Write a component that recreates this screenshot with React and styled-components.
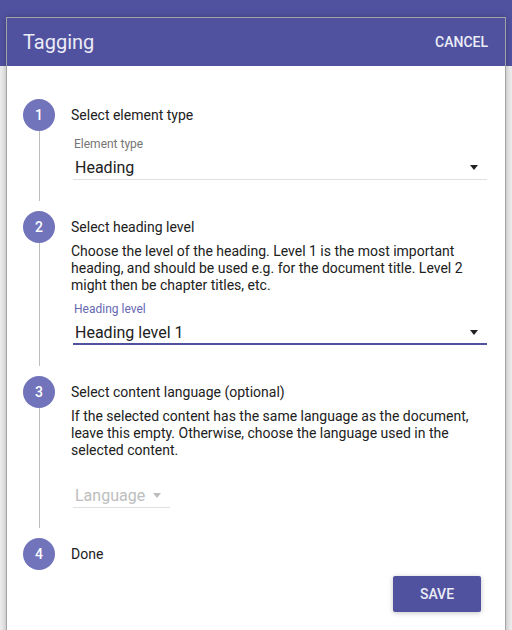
import React from 'react'
import styled, { createGlobalStyle } from 'styled-components'

const Primary = "#5052a0";
const StepColor = "#7173bb";
const Text = "#212121";
const Divider = "#bdbdbd";

const GlobalStyle = createGlobalStyle`
  html, body {
    margin: 0;
    padding: 0;
  }
  body {
    font-family: Roboto, "Liberation Sans", sans-serif;
    background: linear-gradient(${Primary} 0 66px, #ececec 66px);
    height: 630px;
    overflow: hidden;
  }
`

const Page = styled.div`
  padding: 17px 0 0 6px;
`

const Dialog = styled.div`
  width: 500px;
  box-sizing: border-box;
  border: 1px solid #a4a4a4;
  border-bottom: none;
  background: #fff;
  box-shadow: 0 0 6px rgba(0, 0, 0, 0.25);
  height: 640px;
`

const Header = styled.div`
  height: 48px;
  background: ${Primary};
  display: flex;
  align-items: center;
  justify-content: space-between;
  padding: 0 17px 0 16px;
`

const Title = styled.h2`
  margin: 0;
  font-size: 20px;
  font-weight: 400;
  color: #ececf6;
`

const TextButton = styled.button`
  border: none;
  background: none;
  padding: 0;
  font-family: inherit;
  font-size: 14px;
  font-weight: 500;
  color: #ececf6;
  text-transform: uppercase;
`

const Body = styled.div`
  padding: 23px 18px 0 16px;
`

const StepRow = styled.div`
  display: flex;
  align-items: center;
  gap: 16px;
  padding: 10px 0 ${p => (p.$last ? 0 : 10)}px;
`

const Circle = styled.div`
  width: 32px;
  height: 32px;
  border-radius: 50%;
  background: ${StepColor};
  color: #fff;
  font-size: 14px;
  font-weight: 500;
  display: flex;
  align-items: center;
  justify-content: center;
  flex-shrink: 0;
`

const StepLabel = styled.div`
  font-size: 14px;
  color: ${Text};
`

const StepContent = styled.div`
  margin-left: 16px;
  border-left: 1px solid ${Divider};
  padding-left: 31px;
`

const StepInner = styled.div`
  margin-top: -10px;
  padding-bottom: ${p => p.$pb || 21}px;
`

const Description = styled.p`
  margin: 0;
  font-size: 14px;
  line-height: 17px;
  color: ${Text};
`

const Field = styled.div`
  margin-left: 2px;
  padding-top: ${p => (p.$top || 0)}px;
  width: ${p => p.$width || 'auto'};
`

const FieldLabel = styled.div`
  font-size: 12px;
  line-height: 14px;
  height: 14px;
  padding-left: 1px;
  color: ${p => (p.$focused ? '#6668b2' : '#757575')};
`

const Select = styled.div`
  display: flex;
  align-items: center;
  justify-content: space-between;
  margin-top: 7px;
  padding: 0 9px ${p => (p.$focused ? 1 : 2)}px 2px;
  font-size: 16px;
  line-height: 19px;
  color: ${p => (p.$disabled ? '#bdbdbd' : Text)};
  border-bottom: ${p => (p.$focused ? `2px solid ${Primary}` : '1px solid #e0e0e0')};
`

const Arrow = styled.span`
  width: 0;
  height: 0;
  border-left: 4.5px solid transparent;
  border-right: 4.5px solid transparent;
  border-top: 5px solid ${p => (p.$disabled ? '#bdbdbd' : '#212121')};
`

const Actions = styled.div`
  display: flex;
  justify-content: flex-end;
  padding: 6px 6px 0 0;
`

const RaisedButton = styled.button`
  width: 88px;
  height: 36px;
  border: none;
  border-radius: 2px;
  background: ${Primary};
  color: #ececf6;
  font-family: inherit;
  font-size: 14px;
  font-weight: 500;
  text-transform: uppercase;
  box-shadow: 0 1px 6px rgba(0, 0, 0, 0.12), 0 1px 4px rgba(0, 0, 0, 0.12);
`

const SelectField = ({ label, value, placeholder, focused, width, top }) => (
  <Field $width={width} $top={top}>
    <FieldLabel $focused={focused}>{label}</FieldLabel>
    <Select $focused={focused} $disabled={!value}>
      <span>{value || placeholder}</span>
      <Arrow $disabled={!value} />
    </Select>
  </Field>
)

export default function App() {
  return (
    <Page>
      <GlobalStyle />
      <Dialog>
        <Header>
          <Title>Tagging</Title>
          <TextButton>Cancel</TextButton>
        </Header>
        <Body>
          <StepRow>
            <Circle>1</Circle>
            <StepLabel>Select element type</StepLabel>
          </StepRow>
          <StepContent>
            <StepInner>
              <SelectField label="Element type" value="Heading" top={6} />
            </StepInner>
          </StepContent>

          <StepRow>
            <Circle>2</Circle>
            <StepLabel>Select heading level</StepLabel>
          </StepRow>
          <StepContent>
            <StepInner>
              <Description>
                Choose the level of the heading. Level 1 is the most important heading, and should be used e.g. for the document title. Level 2 might then be chapter titles, etc.
              </Description>
              <SelectField label="Heading level" value="Heading level 1" focused top={8} />
            </StepInner>
          </StepContent>

          <StepRow>
            <Circle>3</Circle>
            <StepLabel>Select content language (optional)</StepLabel>
          </StepRow>
          <StepContent>
            <StepInner $pb={20}>
              <Description>
                If the selected content has the same language as the document, leave this empty. Otherwise, choose the language used in the selected content.
              </Description>
              <SelectField label="" placeholder="Language" width="97px" top={6} />
            </StepInner>
          </StepContent>

          <StepRow $last>
            <Circle>4</Circle>
            <StepLabel>Done</StepLabel>
          </StepRow>
          <Actions>
            <RaisedButton>Save</RaisedButton>
          </Actions>
        </Body>
      </Dialog>
    </Page>
  )
}
